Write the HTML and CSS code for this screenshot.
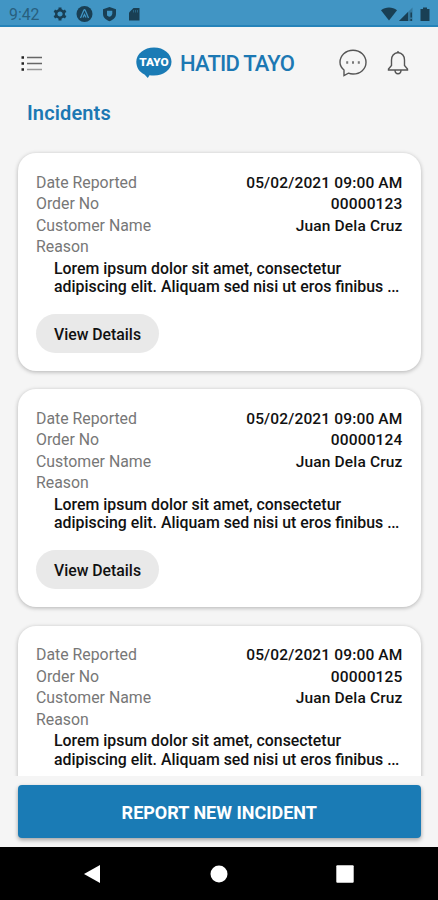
FILE: index.html
```html
<!DOCTYPE html>
<html lang="en">
<head>
<meta charset="utf-8">
<meta name="viewport" content="width=device-width, initial-scale=1">
<title>Hatid Tayo</title>
<link rel="stylesheet" href="styles.css">
</head>
<body>
<div class="status">
  <span class="clock">9:42</span>
  <svg class="status-left" width="88" height="18" viewBox="0 0 88 18" fill="#193f54">
    <g transform="translate(8 9)">
      <circle r="3.8" fill="none" stroke="#193f54" stroke-width="2.4"/>
      <path d="M0-6.5V-4M0 6.500V4M-5.700-3.200-3.500-2M5.700 3.200 3.500 2M-5.700 3.200-3.500 2M5.700-3.200 3.500-2" stroke="#193f54" stroke-width="3"/>
    </g>
    <circle cx="32.500" cy="9" r="8"/>
    <path d="M28.500 13 31.700 5.500Q32.500 4 33.300 5.500L36.500 13M31 12.500 32.500 9.500 34 12.500" fill="none" stroke="#4195c4" stroke-width="1.300"/>
    <path d="M57.500 2 64 4.300V9c0 3.500-3 6-6.500 7.300C54 15 51 12.500 51 9V4.300Z"/>
    <path d="M55 5.700H60.300V8.500Q60 11.500 57 11.700L55 10.500Z" fill="#4195c4"/>
    <path d="M81.500 3H87.500V15.500H77V7.500Z"/>
    <path d="M81.500 5v2.500M83.500 5v2.500M85.500 5v2.500" stroke="#2d6e91" stroke-width=".8"/>
  </svg>
  <svg class="status-right" width="52" height="18" viewBox="0 0 52 18" fill="#193f54">
    <path d="M0 5.200C4.500 1.500 11.500 1.500 16 5.200L8 15.500Z"/>
    <path d="M31.500 2.500V16H18Z" opacity=".35"/>
    <path d="M27 7V16H18Z"/>
    <path d="M30.200 7.500v5M30.200 14v2" stroke="#193f54" stroke-width="1.500"/>
    <path d="M39.500 4H42V2.500h4V4h2.500V16h-9Z"/>
  </svg>
</div>
<header class="header">
  <svg class="menu" width="22" height="17" viewBox="0 0 22 17">
    <path d="M6 2.500H21M6 8.500H21" stroke="#666" stroke-width="1.300"/>
    <path d="M6 14.500H21" stroke="#999" stroke-width="1.500"/>
    <path d="M.5 2.500h2.500M.5 8.500h2.500M.5 14.500h2.500" stroke="#222" stroke-width="2.500"/>
  </svg>
  <div class="brand">
    <svg class="logo" width="36" height="32" viewBox="0 0 36 32">
      <path d="M18 .5C27.800.5 35.500 6.800 35.500 14.800S27.800 28.500 18 28.500Q15.500 28.500 13.500 28.200L11.800 31 8.500 27.500C3.500 25.300.3 20.500.3 14.800.3 6.800 8.200.5 18 .5Z" fill="#1a7bb5"/>
      <text class="logo-text" x="18" y="18.800" text-anchor="middle">TAYO</text>
    </svg>
    <span class="brand-name">HATID TAYO</span>
  </div>
  <div class="actions">
    <svg width="28" height="28" viewBox="0 0 28 28" fill="none" stroke="#555" stroke-width="1.400">
      <path d="M5 21C2.500 19 1 16.500 1 13.300 1 6.600 6.600 1.200 14 1.200S27 6.600 27 13.300 21.400 25 14 25Q11.500 25 9.400 24.200L5 26.500Z"/>
      <path d="M7.200 13.500h2M13 13.500h2M18.800 13.500h2" stroke="#777" stroke-width="2.300"/>
    </svg>
    <svg width="22" height="26" viewBox="0 0 22 26" fill="none" stroke="#555" stroke-width="1.400">
      <path d="M11 2.500C7 3.300 4.500 6 4.500 10V15.500L1.500 19V20H20.500V19L17.500 15.500V10C17.500 6 15 3.300 11 2.500ZM11 1V3M8 20C8 25 14 25 14 20"/>
    </svg>
  </div>
</header>
<main class="content">
  <h1 class="title">Incidents</h1>
  <div class="list">
    <article class="card">
      <div class="row"><span class="label">Date Reported</span><span class="value date">05/02/2021 09:00 AM</span></div>
      <div class="row"><span class="label">Order No</span><span class="value">00000123</span></div>
      <div class="row"><span class="label">Customer Name</span><span class="value">Juan Dela Cruz</span></div>
      <div class="row"><span class="label">Reason</span></div>
      <p class="reason">Lorem ipsum dolor sit amet, consectetur<br>adipiscing elit. Aliquam sed nisi ut eros finibus <span class="more">...</span></p>
      <button class="details">View Details</button>
    </article>
    <article class="card">
      <div class="row"><span class="label">Date Reported</span><span class="value date">05/02/2021 09:00 AM</span></div>
      <div class="row"><span class="label">Order No</span><span class="value">00000124</span></div>
      <div class="row"><span class="label">Customer Name</span><span class="value">Juan Dela Cruz</span></div>
      <div class="row"><span class="label">Reason</span></div>
      <p class="reason">Lorem ipsum dolor sit amet, consectetur<br>adipiscing elit. Aliquam sed nisi ut eros finibus <span class="more">...</span></p>
      <button class="details">View Details</button>
    </article>
    <article class="card">
      <div class="row"><span class="label">Date Reported</span><span class="value date">05/02/2021 09:00 AM</span></div>
      <div class="row"><span class="label">Order No</span><span class="value">00000125</span></div>
      <div class="row"><span class="label">Customer Name</span><span class="value">Juan Dela Cruz</span></div>
      <div class="row"><span class="label">Reason</span></div>
      <p class="reason">Lorem ipsum dolor sit amet, consectetur<br>adipiscing elit. Aliquam sed nisi ut eros finibus <span class="more">...</span></p>
    </article>
  </div>
</main>
<footer class="footer"><button class="report">REPORT NEW INCIDENT</button></footer>
<nav class="nav">
  <svg width="18" height="20" viewBox="0 0 18 20"><path d="M17 1V19L1 10Z" fill="#fff"/></svg>
  <svg width="18" height="18" viewBox="0 0 18 18"><circle cx="9" cy="9" r="8.500" fill="#fff"/></svg>
  <svg width="18" height="18" viewBox="0 0 18 18"><rect x=".3" y=".3" width="17.400" height="17.400" rx="1" fill="#fff"/></svg>
</nav>
</body>
</html>
```
FILE: styles.css
```css
* { box-sizing: border-box; }
body {
  margin: 0;
  height: 900px;
  display: flex;
  flex-direction: column;
  overflow: hidden;
  background: #f5f5f5;
  color: #111;
  font-family: Roboto, sans-serif;
}
svg { display: block; flex: none; }
button { border: 0; font-family: inherit; }
.status {
  flex: none;
  height: 27px;
  display: flex;
  align-items: center;
  padding: 3px 5px 0 9px;
  background: #4195c4;
  border-bottom: 2px solid #2583b9;
}
.clock { width: 43px; font-size: 15.8px; color: #285f7e; }
.status-right { margin-left: auto; }
.header {
  flex: none;
  height: 71px;
  display: grid;
  grid-template-columns: 115px 1fr 99px;
  align-items: center;
  padding: 1px 0 0 21px;
}
.brand { display: flex; align-items: center; gap: 8px; }
.brand-name { padding-top: 1px; font-size: 22px; font-weight: 500; letter-spacing: -.8px; color: #1c78b3; white-space: nowrap; }
.logo-text { font-size: 11.8px; font-weight: 900; fill: #fff; }
.actions { display: flex; align-items: center; gap: 20px; }
.content { flex: 1; min-height: 0; display: flex; flex-direction: column; }
.title {
  flex: none;
  margin: 0;
  height: 39px;
  padding: 3px 27px 0;
  font-size: 20px;
  line-height: 24px;
  font-weight: 600;
  letter-spacing: .12px;
  color: #1c78b3;
}
.list {
  flex: 1;
  min-height: 0;
  overflow: hidden;
  display: flex;
  flex-direction: column;
  gap: 18.3px;
  padding: 16px 17.5px 0 18px;
}
.card {
  flex: none;
  height: 218px;
  padding: 18.5px 18px 0;
  border-radius: 18px;
  background: #fff;
  box-shadow: 0 1px 4px rgba(0, 0, 0, .28);
}
.row { display: flex; justify-content: space-between; height: 21.5px; font-size: 15.85px; line-height: 22px; }
.label { color: #777; }
.value { font-size: 15.5px; font-weight: 500; letter-spacing: .15px; }
.reason { margin: 2px 0 17.5px 18px; font-size: 15.87px; line-height: 18.5px; font-weight: 500; white-space: nowrap; }
.more { letter-spacing: -.5px; }
.details {
  display: block;
  width: 123px;
  height: 39px;
  padding: 2px 0 0;
  border-radius: 20px;
  background: #e9e9e9;
  color: #111;
  font-size: 15.8px;
  font-weight: 500;
}
.footer { flex: none; height: 71px; padding: 8.500px 17.5px 0 18px; }
.report {
  display: block;
  width: 100%;
  height: 53px;
  padding: 2px 0 0;
  border-radius: 4px;
  background: #1a7bb5;
  color: #fff;
  font-size: 18px;
  font-weight: 700;
  box-shadow: 0 2px 4px rgba(0, 0, 0, .35);
}
.nav {
  flex: none;
  height: 53px;
  display: flex;
  align-items: center;
  justify-content: space-between;
  padding: 0 84px 0 83px;
  background: #000;
}
```
